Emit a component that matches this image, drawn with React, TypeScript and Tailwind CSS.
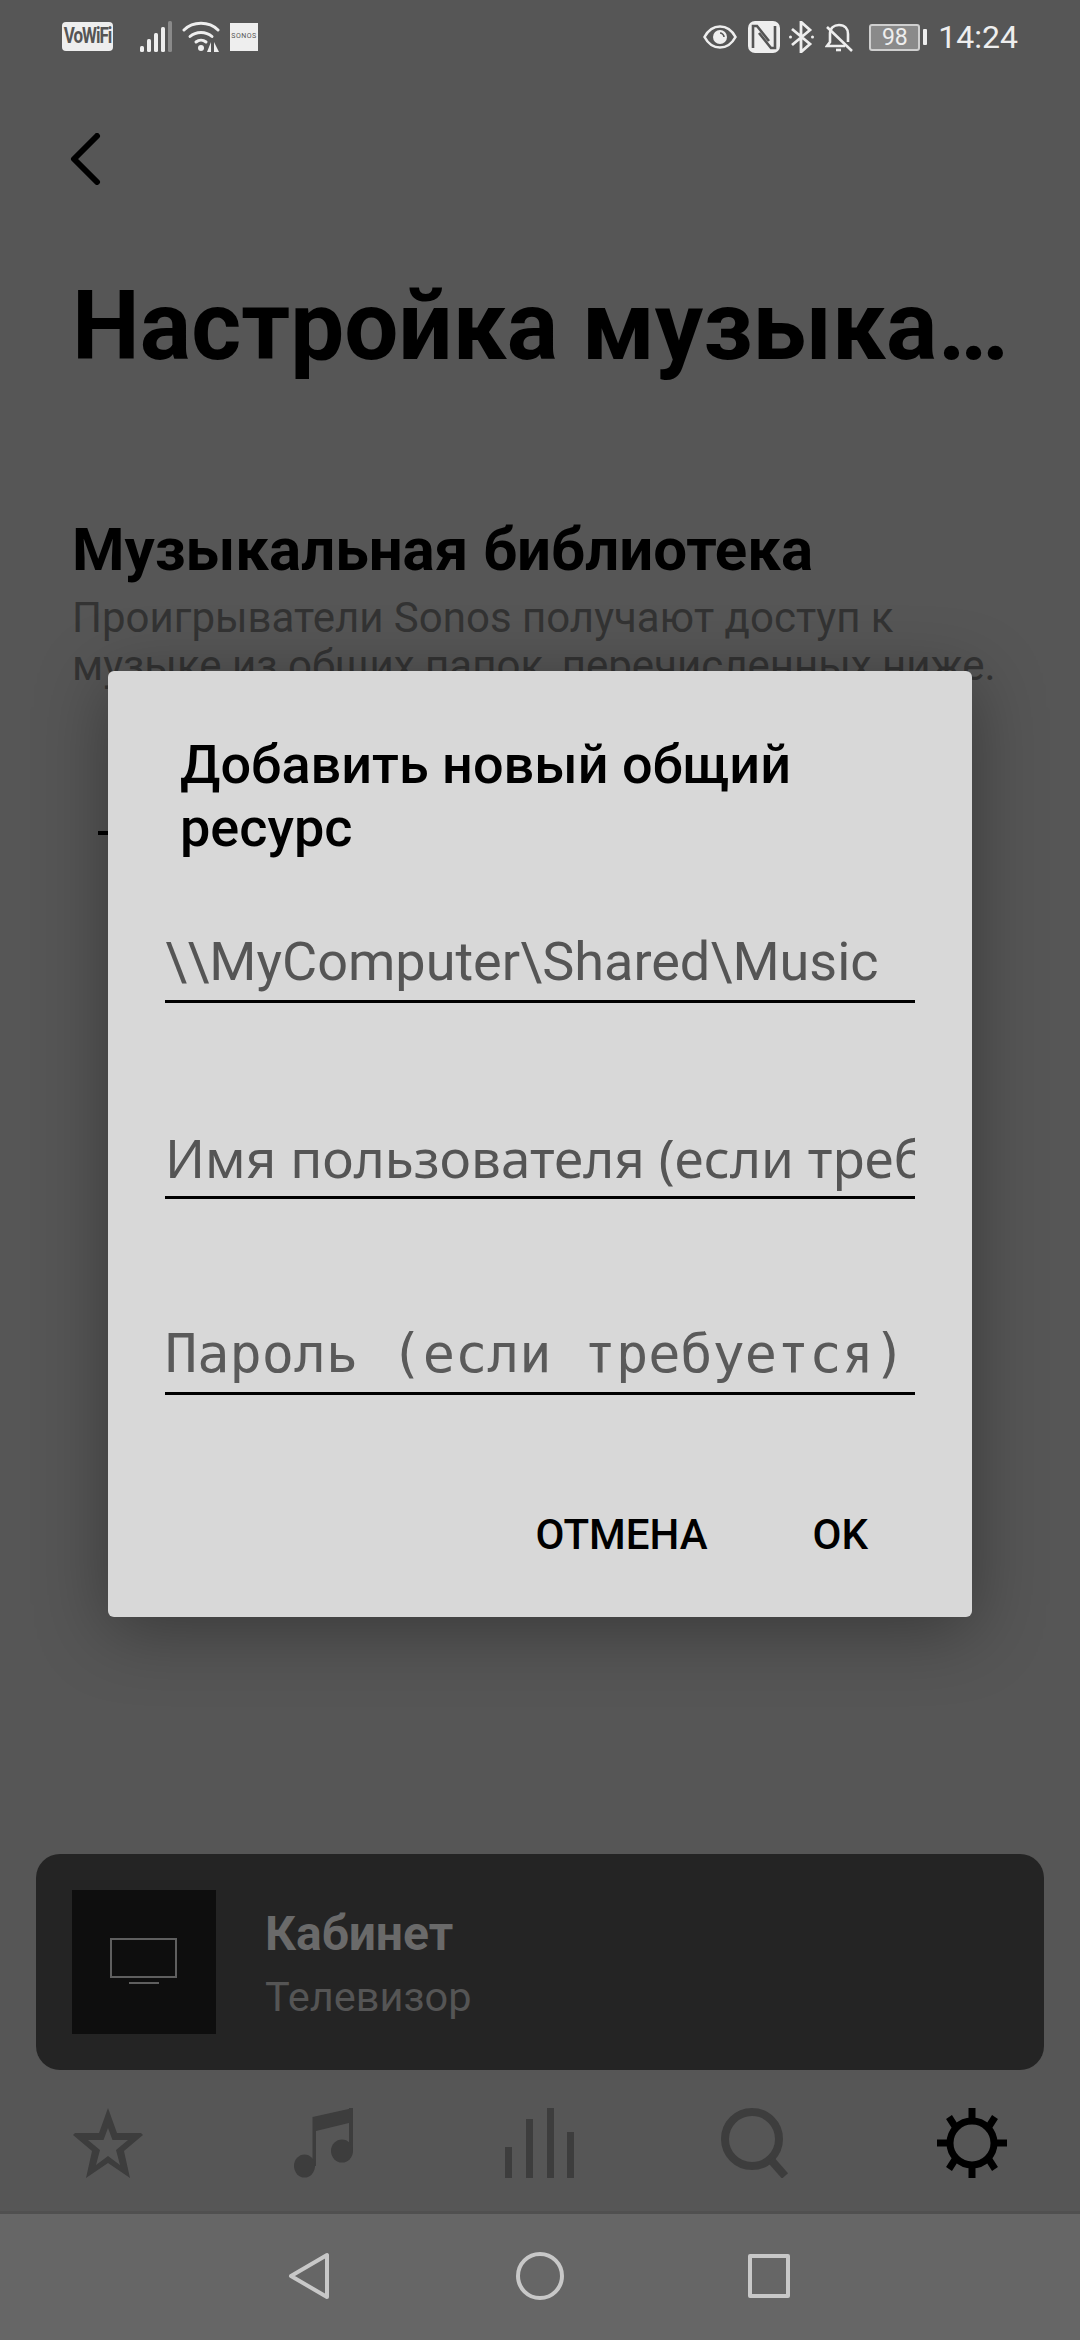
function StatusLeft() {
  return (
    <div className="flex items-center">
      <div className="w-[51px] h-[29px] bg-[#eeeeee] rounded-[4px] flex items-center justify-center overflow-hidden text-[#555555] text-[17px] font-bold tracking-[-1px] font-['Roboto',sans-serif]">
        <span className="scale-y-125">VoWiFi</span>
      </div>
      <svg className="ml-[27px] w-[33px] h-[31px]" viewBox="0 0 33 31">
        <rect x="0" y="25" width="4" height="6" rx="1.5" fill="#eeeeee" />
        <rect x="7" y="18" width="4" height="13" rx="1.5" fill="#eeeeee" />
        <rect x="14" y="12" width="4" height="19" rx="1.5" fill="#eeeeee" />
        <rect x="21" y="6" width="4" height="25" rx="1.5" fill="#eeeeee" />
        <rect x="28" y="0" width="4" height="31" rx="1.5" fill="#8a8a8a" />
      </svg>
      <svg className="ml-[9px] w-[38px] h-[31px]" viewBox="0 0 38 31" fill="none" stroke="#eeeeee" strokeWidth="3" strokeLinecap="round">
        <path d="M2 9 C11 0 27 0 36 9" />
        <path d="M8 15.5 C14 10 24 10 30 15.5" />
        <path d="M14 21 C17 18.5 21 18.5 24 21" />
        <circle cx="19" cy="27" r="3" fill="#eeeeee" stroke="none" />
        <path d="M29 21 L29 31 L25 31 Z" fill="#eeeeee" stroke="none" />
        <path d="M32 21 L32 31 L37 31 Z" fill="#eeeeee" stroke="none" />
      </svg>
      <div className="ml-[10px] w-[28px] h-[28px] bg-[#eeeeee] flex items-center justify-center text-[#555555] text-[7px] tracking-[0.5px] font-['Roboto',sans-serif]">
        SONOS
      </div>
    </div>
  );
}

function StatusRight() {
  return (
    <div className="flex items-center text-[#eeeeee]">
      <svg className="w-[34px] h-[26px]" viewBox="0 0 34 26" fill="none" stroke="#eeeeee" strokeWidth="2.6">
        <path d="M1.5 13 C9 -1 25 -1 32.5 13 C25 27 9 27 1.5 13 Z" />
        <circle cx="17" cy="13" r="7" fill="#eeeeee" stroke="none" />
        <path d="M17 9 C19 9 21 11 21 13" stroke="#555555" strokeWidth="1.6" />
      </svg>
      <svg className="ml-[11px] w-[32px] h-[32px]" viewBox="0 0 32 32">
        <rect width="32" height="32" rx="7" fill="#eeeeee" />
        <path d="M5 27 V5 H9 L21 20 M27 5 V27 H23 L11 12" fill="none" stroke="#555555" strokeWidth="2.6" />
      </svg>
      <svg className="ml-[9px] w-[25px] h-[32px]" viewBox="0 0 25 32" fill="none" stroke="#eeeeee" strokeWidth="2.8">
        <path d="M3 8 L21 23 L12 31 V1 L21 9 L3 24" />
        <circle cx="1.5" cy="16" r="1.5" fill="#eeeeee" stroke="none" />
        <circle cx="23.5" cy="16" r="1.5" fill="#eeeeee" stroke="none" />
      </svg>
      <svg className="ml-[11px] w-[28px] h-[31px]" viewBox="0 0 28 31" fill="none" stroke="#eeeeee" strokeWidth="2.6">
        <path d="M5 12 C5 6 9 3 14 3 C20 3 23 7 23 12 V20" />
        <path d="M5 12 V20 L2 24 H20" />
        <path d="M2 5 L27 29" />
        <path d="M11 28 H16" />
      </svg>
      <div className="ml-[16px] w-[51px] h-[27px] border-2 border-[#cfcfcf] rounded-[3px] bg-[#8a8a8a] flex items-center justify-center text-[23px] leading-none font-['Roboto',sans-serif]">
        98
      </div>
      <div className="ml-[3px] w-[4px] h-[16px] bg-[#eeeeee] rounded-[1px]" />
      <div className="ml-[11px] text-[32px] leading-none font-['Roboto',sans-serif]">14:24</div>
    </div>
  );
}

function AddSharedDialog() {
  const fields = [
    { label: '\\\\MyComputer\\Shared\\Music', font: "font-['Roboto',sans-serif] text-[54px] text-[#555555]" },
    { label: 'Имя пользователя (если требуется)', font: "font-['Noto_Sans',sans-serif] text-[53px] text-[#555555]" },
    { label: 'Пароль (если требуется)', font: "font-['DejaVu_Sans_Mono',monospace] text-[53.5px] text-[#5a5a5a]" },
  ];

  return (
    <div className="absolute left-[108px] top-[671px] w-[864px] h-[946px] bg-[#d8d8d8] rounded-[6px] shadow-[0_12px_70px_rgba(0,0,0,0.35)]">
      <h3 className="ml-[72px] mt-[62px] text-[#000000] text-[54px] leading-[63px] font-medium font-['Roboto',sans-serif]">
        Добавить новый общий<br />ресурс
      </h3>
      <div className="mx-[57px] mt-[71px] flex flex-col gap-[123px]">
        {fields.map((f) => (
          <div key={f.label} className={`h-[73px] border-b-[3px] border-black overflow-x-clip whitespace-nowrap leading-[64px] ${f.font}`}>
            {f.label}
          </div>
        ))}
      </div>
      <div className="mt-[116px] pr-[104px] flex justify-end gap-[105px] text-black text-[42px] leading-[48px] font-medium font-['Roboto',sans-serif]">
        <span>ОТМЕНА</span>
        <span>OK</span>
      </div>
    </div>
  );
}

function TabBar() {
  return (
    <div className="h-[141px] pt-[38px] grid grid-cols-5 justify-items-center items-start">
      <svg className="w-[70px] h-[70px]" viewBox="0 0 70 70" fill="#3d3d3d" fillRule="evenodd">
        <path d="M35 0 L44 25 L68 25 L70 27 L51 43 L57 70 L35 55 L13 70 L19 43 L0 27 L2 25 L26 25 Z M35 20 L30.5 32 L15 32 L27 42 L23 57 L35 48 L47 57 L43 42 L55 32 L39.5 32 Z" />
      </svg>
      <svg className="w-[60px] h-[70px]" viewBox="0 0 60 70" fill="#3d3d3d">
        <path d="M18.5 9 L59 0 V14 L22 23 V58 H18.5 Z" />
        <rect x="55" y="0" width="4" height="43" />
        <ellipse cx="10.5" cy="58" rx="10.5" ry="11.5" />
        <ellipse cx="48" cy="43" rx="11" ry="11.5" />
      </svg>
      <svg className="w-[70px] h-[70px]" viewBox="0 0 70 70" fill="#3d3d3d">
        <rect x="0" y="39" width="7" height="31" />
        <rect x="21" y="11" width="7" height="59" />
        <rect x="42" y="0" width="7" height="70" />
        <rect x="62" y="24" width="7" height="46" />
      </svg>
      <svg className="w-[70px] h-[70px]" viewBox="0 0 70 70" fill="none" stroke="#3d3d3d">
        <circle cx="31" cy="31" r="27" strokeWidth="8" />
        <path d="M50 52 L64 68" strokeWidth="8" />
      </svg>
      <svg className="w-[70px] h-[70px]" viewBox="0 0 70 70" fill="none" stroke="#000000" strokeWidth="7">
        <circle cx="35" cy="35" r="22" />
        <path d="M35 0 V13 M35 57 V70 M0 35 H13 M57 35 H70" />
        <path d="M12 9 L19 20 M58 9 L51 20 M12 61 L19 50 M58 61 L51 50" />
      </svg>
    </div>
  );
}

function NowPlaying() {
  return (
    <div className="mx-[36px] h-[216px] rounded-[24px] bg-[#242424] pl-[36px] flex items-center">
      <div className="w-[144px] h-[144px] bg-[#0e0e0e] flex items-center justify-center">
        <svg className="w-[68px] h-[48px]" viewBox="0 0 68 48" fill="none" stroke="#5f5f5f" strokeWidth="2">
          <rect x="1" y="1" width="65" height="38" />
          <path d="M19 45 H49" />
        </svg>
      </div>
      <div className="ml-[49px] pt-[6px] flex flex-col font-['Roboto',sans-serif]">
        <span className="text-[#6a6a6a] text-[48px] leading-[60px] font-bold">Кабинет</span>
        <span className="mt-[3px] text-[#555555] text-[41.5px] leading-[60px]">Телевизор</span>
      </div>
    </div>
  );
}

export default function App() {
  return (
    <div className="relative w-[1080px] h-[2340px] overflow-hidden bg-[#565656] flex flex-col font-['Roboto',sans-serif]">
      <div className="h-[80px] pl-[62px] pr-[62px] pt-[21px] flex items-start justify-between">
        <StatusLeft />
        <StatusRight />
      </div>

      <div className="ml-[70px] mt-[53px] h-[52px]">
        <svg className="w-[32px] h-[52px]" viewBox="0 0 32 52" fill="none" stroke="#000000" strokeWidth="6" strokeLinecap="round" strokeLinejoin="round">
          <path d="M27 3 L4 26 L27 49" />
        </svg>
      </div>

      <h1 className="mx-[72px] mt-[86px] text-black text-[96px] leading-[110px] font-bold whitespace-nowrap">
        Настройка музыка…
      </h1>

      <h2 className="mx-[72px] mt-[136px] text-black text-[60px] leading-[66px] font-bold whitespace-nowrap">
        Музыкальная библиотека
      </h2>
      <p className="ml-[72px] mr-[20px] mt-[11px] text-[#333333] text-[42px] leading-[48px] whitespace-nowrap">
        Проигрыватели Sonos получают доступ к<br />музыке из общих папок, перечисленных ниже.
      </p>
      <div className="ml-[98px] mt-[141px] w-[20px] h-[4px] bg-black" />

      <div className="flex-1" />
      <NowPlaying />
      <TabBar />
      <div className="h-[129px] pb-[2px] bg-[#666666] border-t-[3px] border-[#505050] flex items-center">
        <svg className="ml-[288px] w-[42px] h-[48px]" viewBox="0 0 42 48" fill="none" stroke="#c8c8c8" strokeWidth="4" strokeLinejoin="round">
          <path d="M39 3 V45 L3 24 Z" />
        </svg>
        <svg className="ml-[186px] w-[48px] h-[48px]" viewBox="0 0 48 48" fill="none" stroke="#c8c8c8" strokeWidth="4">
          <circle cx="24" cy="24" r="22" />
        </svg>
        <div className="ml-[184px] w-[42px] h-[44px] border-[4px] border-[#c8c8c8] rounded-[2px]" />
      </div>

      <AddSharedDialog />
    </div>
  );
}
